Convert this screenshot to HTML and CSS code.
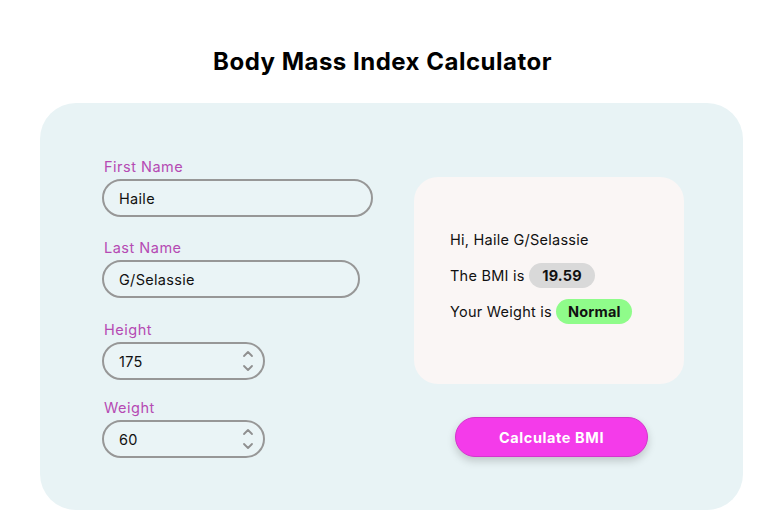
FILE: index.html
```html
<!DOCTYPE html>
<html lang="en">
<head>
<meta charset="utf-8">
<title>Body Mass Index Calculator</title>
<link rel="stylesheet" href="styles.css">
</head>
<body>
<h1 class="title">Body Mass Index Calculator</h1>
<main class="card">
  <form class="form">
    <div class="group g-first">
      <label class="label" for="fn">First Name</label>
      <div class="field w-first"><input id="fn" class="input" type="text" value="Haile"></div>
    </div>
    <div class="group g-last">
      <label class="label" for="ln">Last Name</label>
      <div class="field w-last"><input id="ln" class="input" type="text" value="G/Selassie"></div>
    </div>
    <div class="group g-height">
      <label class="label" for="ht">Height</label>
      <div class="field field-num w-num"><input id="ht" class="input" type="text" value="175">
        <svg class="spin" width="12" height="26" viewBox="0 0 12 26"><path d="M2 8 L6 4 L10 8" /><path d="M2 18 L6 22 L10 18" /></svg>
      </div>
    </div>
    <div class="group g-weight">
      <label class="label" for="wt">Weight</label>
      <div class="field field-num w-num"><input id="wt" class="input" type="text" value="60">
        <svg class="spin" width="12" height="26" viewBox="0 0 12 26"><path d="M2 8 L6 4 L10 8" /><path d="M2 18 L6 22 L10 18" /></svg>
      </div>
    </div>
  </form>
  <section class="side">
    <div class="result">
      <p class="line">Hi, Haile G/Selassie</p>
      <p class="line">The BMI is <span class="badge badge-bmi">19.59</span></p>
      <p class="line">Your Weight is <span class="badge badge-ok">Normal</span></p>
    </div>
    <button class="btn" type="button">Calculate BMI</button>
  </section>
</main>
</body>
</html>
```
FILE: styles.css
```css
* { box-sizing: border-box; }
html, body { margin: 0; padding: 0; background: #ffffff; }
body {
  font-family: "Inter", "Noto Sans", sans-serif;
  color: #111;
  width: 782px;
  height: 530px;
  overflow: hidden;
}
.title {
  margin: 0;
  padding-top: 47px;
  padding-right: 17px;
  height: 103px;
  text-align: center;
  font-size: 24px;
  font-weight: 700;
  letter-spacing: 0.5px;
  line-height: 30px;
  color: #000;
}
.card {
  margin-left: 40px;
  width: 703px;
  height: 407px;
  background: #e8f3f5;
  border-radius: 36px;
  display: flex;
  padding: 54px 0 0 62px;
}
.form { width: 312px; display: flex; flex-direction: column; }
.group { display: flex; flex-direction: column; }
.g-last { margin-top: 21px; }
.g-height { margin-top: 22px; }
.g-weight { margin-top: 18px; }
.label {
  font-size: 14.5px;
  line-height: 20px;
  letter-spacing: 0.5px;
  color: #b54ab3;
  padding-left: 2px;
  margin-bottom: 2px;
}
.field {
  height: 38px;
  border: 2px solid #979797;
  border-radius: 19px;
  background: #eaf4f6;
  display: flex;
  align-items: center;
  padding: 0 14px 0 15px;
}
.field-num { padding-right: 9px; }
.w-first { width: 271px; }
.w-last { width: 258px; }
.w-num { width: 163px; }
.input {
  border: 0;
  background: transparent;
  font: inherit;
  font-size: 14.5px;
  letter-spacing: 0.3px;
  color: #111;
  flex: 1;
  min-width: 0;
  padding: 0;
  outline: none;
}
.spin { fill: none; stroke: #8f8f8f; stroke-width: 1.8; stroke-linecap: round; stroke-linejoin: round; }
.side {
  padding-top: 20px;
  display: flex;
  flex-direction: column;
  align-items: flex-start;
}
.result {
  width: 270px;
  height: 207px;
  background: #faf6f5;
  border-radius: 24px;
  padding: 50px 0 0 36px;
}
.line {
  margin: 0 0 11px 0;
  font-size: 14.5px;
  letter-spacing: 0.25px;
  line-height: 25px;
  display: flex;
  align-items: center;
  white-space: pre;
}
.badge {
  display: inline-block;
  height: 25px;
  line-height: 25px;
  border-radius: 13px;
  font-weight: 700;
  margin-left: 0;
  text-align: center;
  letter-spacing: 0.2px;
}
.badge-bmi { background: #d9d9d9; width: 66px; }
.badge-ok { background: #8ffc8a; width: 76px; }
.btn {
  margin-top: 33px;
  margin-left: 41px;
  width: 193px;
  height: 40px;
  border-radius: 20px;
  border: 1px solid #d535cc;
  background: #f43bea;
  color: #fff;
  font: inherit;
  font-size: 14.5px;
  font-weight: 700;
  letter-spacing: 0.6px;
  box-shadow: 0 4px 8px rgba(0, 0, 0, 0.18);
}
```
